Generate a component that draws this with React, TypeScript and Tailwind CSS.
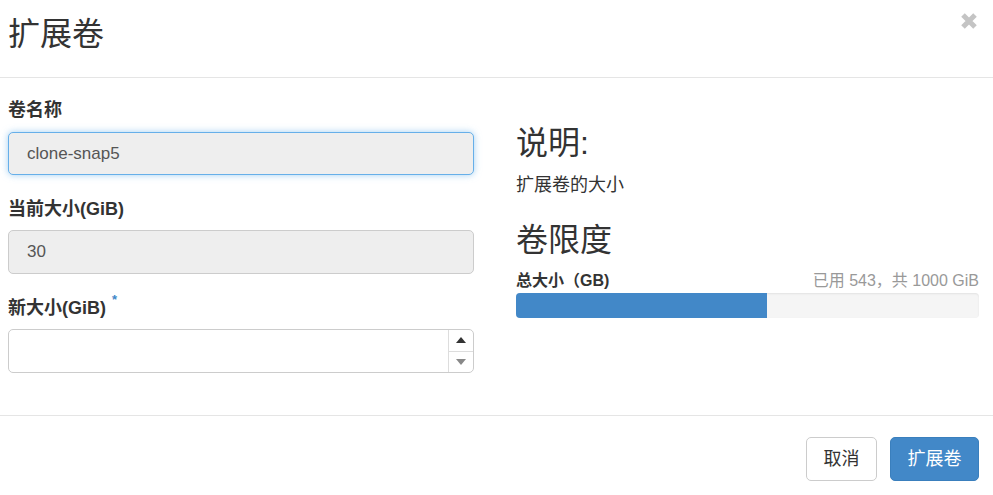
import { useState } from "react";

const font = "font-['Liberation_Sans','Noto_Sans_CJK_SC',sans-serif]";

const Label = ({ children, className = "" }: { children: React.ReactNode; className?: string }) => (
  <div className={`h-[20px] leading-[20px] text-[18px] font-bold text-[#333] ${className}`}>{children}</div>
);

const ExtendVolume = () => {
  const [newSize, setNewSize] = useState("");
  const used = 543;
  const total = 1000;

  return (
    <div className={`w-[993px] h-[495px] bg-white text-[#333] ${font}`}>
      {/* header */}
      <div className="h-[78px] border-b border-[#e5e5e5] flex items-center justify-between pl-[8px] pr-[15px]">
        <h4 className="text-[32px] leading-[36px] font-normal text-[#333] -mt-[10px]">扩展卷</h4>
        <button className="-mt-[35px] text-[#c4c4c4]">
          <svg width="18" height="18" viewBox="0 0 18 18">
            <path d="M3 3 L15 15 M15 3 L3 15" stroke="currentColor" strokeWidth="5" strokeLinecap="butt" />
          </svg>
        </button>
      </div>

      {/* body */}
      <div className="h-[337px] flex pl-[8px] pr-[14px]">
        <div className="w-[466px] flex flex-col">
          <Label className="mt-[22px] mb-[12px]">卷名称</Label>
          <input
            readOnly
            value="clone-snap5"
            className="h-[43px] w-full rounded-[5px] border border-[#66afe9] bg-[#eeeeee] px-[18px] text-[17px] text-[#555] outline-none shadow-[0_0_7px_rgba(102,175,233,0.6)]"
          />
          <Label className="mt-[24px] mb-[11px]">当前大小(GiB)</Label>
          <input
            readOnly
            value="30"
            className="h-[44px] w-full rounded-[5px] border border-[#cccccc] bg-[#eeeeee] px-[18px] text-[17px] text-[#555] outline-none"
          />
          <div className="mt-[24px] mb-[11px] flex items-start">
            <Label>新大小(GiB)</Label>
            <span className="ml-[6px] -mt-[8px] text-[13px] font-bold text-[#3f87c8]">*</span>
          </div>
          <div className="h-[44px] w-full flex rounded-[5px] border border-[#cccccc] bg-white overflow-hidden">
            <input
              value={newSize}
              onChange={(e) => setNewSize(e.target.value)}
              className="flex-1 px-[18px] text-[17px] text-[#555] outline-none"
            />
            <div className="w-[25px] border-l border-[#dddddd] flex flex-col">
              <div className="flex-1 flex items-center justify-center border-b border-[#dddddd]">
                <svg width="10" height="6" viewBox="0 0 10 6"><path d="M0 6 L5 0 L10 6 Z" fill="#333" /></svg>
              </div>
              <div className="flex-1 flex items-center justify-center">
                <svg width="10" height="6" viewBox="0 0 10 6"><path d="M0 0 L5 6 L10 0 Z" fill="#888" /></svg>
              </div>
            </div>
          </div>
        </div>

        <div className="ml-[42px] flex-1 flex flex-col">
          <h3 className="mt-[47px] text-[32px] leading-[36px] font-normal">说明:</h3>
          <p className="mt-[13px] text-[18px] leading-[22px]">扩展卷的大小</p>
          <h3 className="mt-[26px] text-[32px] leading-[36px] font-normal">卷限度</h3>
          <div className="mt-[13px] flex items-center justify-between h-[20px]">
            <span className="text-[16px] font-bold">总大小（GB)</span>
            <span className="text-[16px] text-[#999]">已用 {used}，共 {total} GiB</span>
          </div>
          <div className="mt-[2px] h-[25px] w-full rounded-[4px] bg-[#f5f5f5] overflow-hidden shadow-[inset_0_1px_2px_rgba(0,0,0,0.08)]">
            <div className="h-full bg-[#4288c8]" style={{ width: `${(used / total) * 100}%` }} />
          </div>
        </div>
      </div>

      {/* footer */}
      <div className="border-t border-[#e5e5e5] flex justify-end gap-[13px] pt-[21px] pr-[14px]">
        <button className="h-[44px] w-[71px] rounded-[5px] border border-[#cccccc] bg-white text-[18px] text-[#333]">取消</button>
        <button className="h-[44px] w-[89px] rounded-[5px] border border-[#3a7fbd] bg-[#4288c8] text-[18px] text-white">扩展卷</button>
      </div>
    </div>
  );
};

export default function App() {
  return <ExtendVolume />;
}
